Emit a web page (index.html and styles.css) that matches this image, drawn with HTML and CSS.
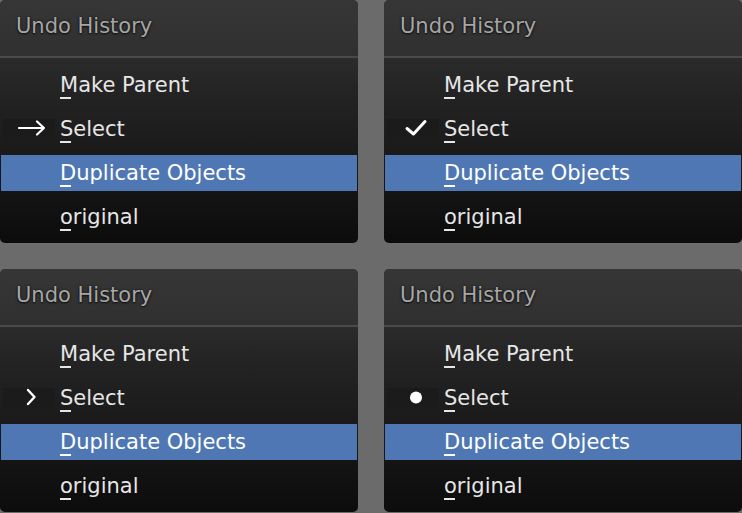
FILE: index.html
```html
<!DOCTYPE html>
<html lang="en">
<head>
    <meta charset="UTF-8">
    <meta name="viewport" content="width=device-width, initial-scale=1.0">
    <title>Undo History</title>
    <link rel="stylesheet" href="styles.css">
</head>
<body>
    <div class="grid">
        <div class="menu">
            <div class="menu-title">Undo History</div>
            <div class="menu-items">
                <div class="item"><span class="icon"></span><span><span class="key">M</span>ake Parent</span></div>
                <div class="item"><span class="icon boxed">
                    <svg width="52" height="22" viewBox="0 0 52 22"><path d="M16 9 H41 M34 2.5 L41 9 L34 15.5" fill="none" stroke="#fff" stroke-width="2.2" stroke-linecap="round" stroke-linejoin="round"/></svg>
                </span><span><span class="key">S</span>elect</span></div>
                <div class="item active"><span class="icon"></span><span><span class="key">D</span>uplicate Objects</span></div>
                <div class="item"><span class="icon"></span><span><span class="key">o</span>riginal</span></div>
            </div>
        </div>

        <div class="menu">
            <div class="menu-title">Undo History</div>
            <div class="menu-items">
                <div class="item"><span class="icon"></span><span><span class="key">M</span>ake Parent</span></div>
                <div class="item"><span class="icon boxed">
                    <svg width="52" height="22" viewBox="0 0 52 22"><path d="M20 9.5 L26.5 15 L38 2.5" fill="none" stroke="#fff" stroke-width="3" stroke-linecap="round" stroke-linejoin="round"/></svg>
                </span><span><span class="key">S</span>elect</span></div>
                <div class="item active"><span class="icon"></span><span><span class="key">D</span>uplicate Objects</span></div>
                <div class="item"><span class="icon"></span><span><span class="key">o</span>riginal</span></div>
            </div>
        </div>

        <div class="menu">
            <div class="menu-title">Undo History</div>
            <div class="menu-items">
                <div class="item"><span class="icon"></span><span><span class="key">M</span>ake Parent</span></div>
                <div class="item"><span class="icon boxed">
                    <svg width="52" height="22" viewBox="0 0 52 22"><path d="M25 2 L31.5 9 L25 16" fill="none" stroke="#fff" stroke-width="2.4" stroke-linecap="round" stroke-linejoin="round"/></svg>
                </span><span><span class="key">S</span>elect</span></div>
                <div class="item active"><span class="icon"></span><span><span class="key">D</span>uplicate Objects</span></div>
                <div class="item"><span class="icon"></span><span><span class="key">o</span>riginal</span></div>
            </div>
        </div>

        <div class="menu">
            <div class="menu-title">Undo History</div>
            <div class="menu-items">
                <div class="item"><span class="icon"></span><span><span class="key">M</span>ake Parent</span></div>
                <div class="item"><span class="icon boxed">
                    <svg width="52" height="22" viewBox="0 0 52 22"><circle cx="29" cy="9.5" r="6" fill="#fff"/></svg>
                </span><span><span class="key">S</span>elect</span></div>
                <div class="item active"><span class="icon"></span><span><span class="key">D</span>uplicate Objects</span></div>
                <div class="item"><span class="icon"></span><span><span class="key">o</span>riginal</span></div>
            </div>
        </div>
    </div>
</body>
</html>
```

FILE: styles.css
```css
body {
    margin: 0;
    background-color: #6b6b6b;
    font-family: "DejaVu Sans", sans-serif;
    font-size: 21px;
}
.grid {
    display: grid;
    grid-template-columns: 358px 358px;
    grid-template-rows: 243px 243px;
    gap: 26px;
}
.menu {
    border-radius: 5px;
    overflow: hidden;
    background: linear-gradient(#2b2b2b 58px, #242424 90px, #0c0c0c 243px);
}
.menu-title {
    height: 56px;
    line-height: 52px;
    padding-left: 16px;
    color: #a6a6a6;
    text-shadow: 0 1px 2px rgba(0, 0, 0, 0.7), 0 0 3px rgba(0, 0, 0, 0.5);
    background: linear-gradient(#363636, #303030);
    border-bottom: 2px solid #4a4a4a;
}
.menu-items {
    display: flex;
    flex-direction: column;
    gap: 8px;
    padding: 9px 1px 8px;
}
.item {
    display: flex;
    align-items: center;
    height: 36px;
    line-height: 36px;
    color: #e6e6e6;
}
.item.active {
    background-color: #4f77b4;
    color: #fff;
}
.icon {
    width: 52px;
    height: 22px;
    margin: 2px 5px 0 2px;
    flex-shrink: 0;
}
.icon.boxed {
    background-color: #1b1b1b;
}
.icon svg {
    display: block;
}
.key {
    position: relative;
}
.key::after {
    content: "";
    position: absolute;
    left: 0;
    top: 23.5px;
    width: 0.5em;
    height: 2px;
    background-color: currentColor;
}
```
